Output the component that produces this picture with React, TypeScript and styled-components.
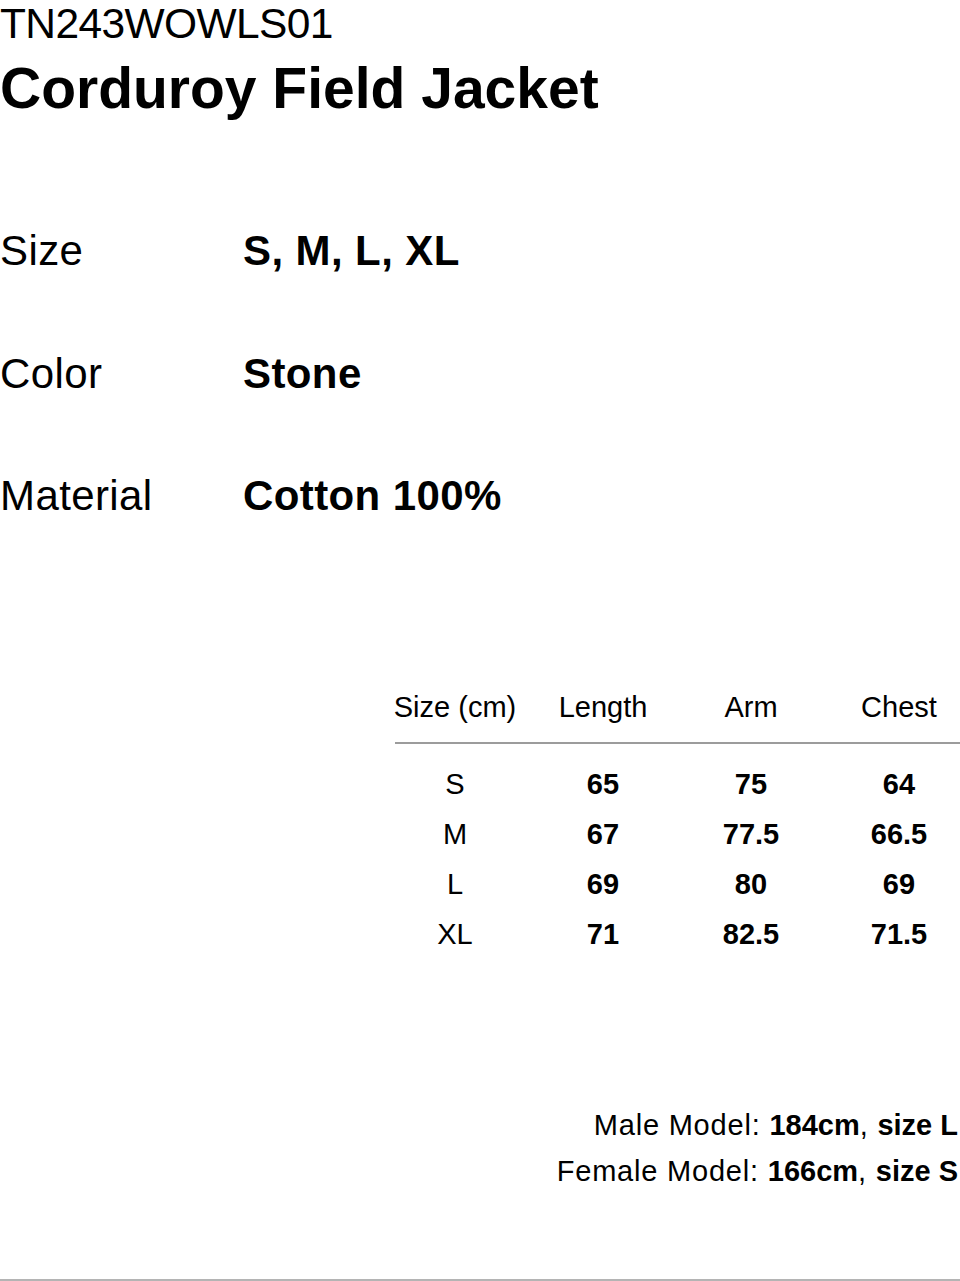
import React from 'react';
import styled, { createGlobalStyle } from 'styled-components';

const GlobalStyle = createGlobalStyle`
  html, body {
    margin: 0;
    padding: 0;
    background: #fff;
    overflow-x: hidden;
  }
  body {
    font-family: "Liberation Sans", Helvetica, Arial, sans-serif;
    color: #000;
  }
`;

const Page = styled.div`
  width: 960px;
  height: 1281px;
  display: flex;
  flex-direction: column;
  overflow: hidden;
`;

const Code = styled.div`
  font-size: 42.5px;
  line-height: normal;
  letter-spacing: -0.6px;
`;

const Title = styled.h1`
  margin: 11.5px 0 0;
  font-size: 57px;
  line-height: 57px;
  font-weight: 700;
`;

const Specs = styled.dl`
  margin: 113.5px 0 0;
  display: flex;
  flex-direction: column;
  gap: 80.5px;
`;

const SpecRow = styled.div`
  display: grid;
  grid-template-columns: 243px 1fr;
  font-size: 42px;
  line-height: 42px;
  letter-spacing: 0.4px;
`;

const SpecLabel = styled.dt`
  margin: 0;
  font-weight: 400;
`;

const SpecValue = styled.dd`
  margin: 0;
  font-weight: 700;
`;

const Table = styled.div`
  margin: 176px 0 0 381px;
  display: flex;
  flex-direction: column;
`;

const Row = styled.div<{ $head?: boolean }>`
  display: grid;
  grid-template-columns: repeat(4, 148px);
  font-size: 29px;
  line-height: ${(p) => (p.$head ? '29px' : '50px')};
`;

const Cell = styled.span<{ $bold?: boolean }>`
  text-align: center;
  white-space: nowrap;
  font-weight: ${(p) => (p.$bold ? 700 : 400)};
`;

const Divider = styled.div`
  margin: 19.5px 0 15px 14px;
  height: 2px;
  background: #9c9c9c;
`;

const Models = styled.div`
  margin-top: 143px;
  padding-right: 2px;
  display: flex;
  flex-direction: column;
  align-items: flex-end;
  font-size: 29px;
  line-height: 46px;
`;

const ModelLine = styled.div`
  white-space: nowrap;
  letter-spacing: 0.8px;
  b {
    font-weight: 700;
    letter-spacing: 0;
  }
`;

const BottomRule = styled.div`
  margin-top: auto;
  height: 2px;
  background: #b4b4b4;
`;

const specs = [
  { label: 'Size', value: 'S, M, L, XL' },
  { label: 'Color', value: 'Stone' },
  { label: 'Material', value: 'Cotton 100%' },
];

const sizes = [
  ['S', '65', '75', '64'],
  ['M', '67', '77.5', '66.5'],
  ['L', '69', '80', '69'],
  ['XL', '71', '82.5', '71.5'],
];

export default function App() {
  return (
    <>
      <GlobalStyle />
      <Page>
        <Code>TN243WOWLS01</Code>
        <Title>Corduroy Field Jacket</Title>

        <Specs>
          {specs.map((s) => (
            <SpecRow key={s.label}>
              <SpecLabel>{s.label}</SpecLabel>
              <SpecValue>{s.value}</SpecValue>
            </SpecRow>
          ))}
        </Specs>

        <Table>
          <Row $head>
            <Cell>Size (cm)</Cell>
            <Cell>Length</Cell>
            <Cell>Arm</Cell>
            <Cell>Chest</Cell>
          </Row>
          <Divider />
          {sizes.map(([size, ...vals]) => (
            <Row key={size}>
              <Cell>{size}</Cell>
              {vals.map((v, i) => (
                <Cell key={i} $bold>
                  {v}
                </Cell>
              ))}
            </Row>
          ))}
        </Table>

        <Models>
          <ModelLine>
            Male Model: <b>184cm</b>, <b>size L</b>
          </ModelLine>
          <ModelLine>
            Female Model: <b>166cm</b>, <b>size S</b>
          </ModelLine>
        </Models>

        <BottomRule />
      </Page>
    </>
  );
}
